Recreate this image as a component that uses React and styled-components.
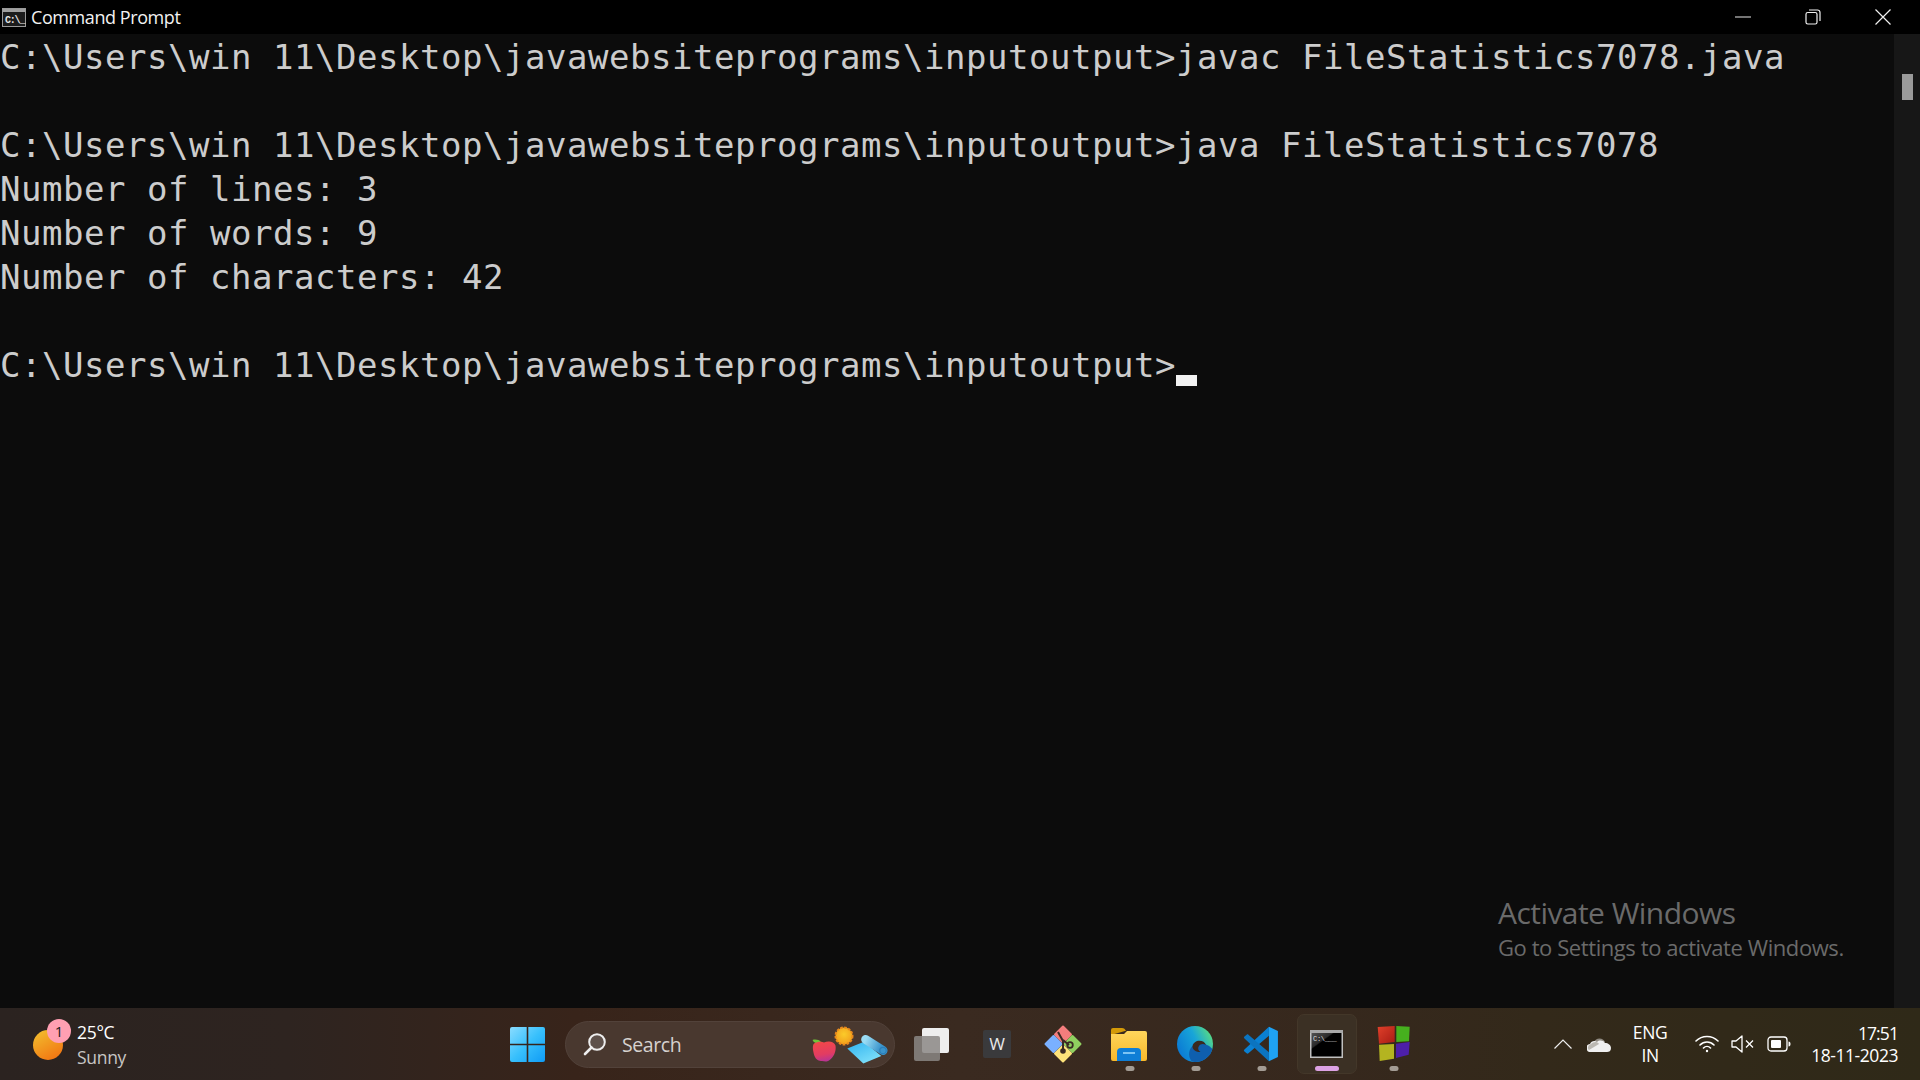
import React from 'react';
import styled, { createGlobalStyle } from 'styled-components';

const Global = createGlobalStyle`
  html, body { margin: 0; padding: 0; background: #0c0c0c; }
  #root { width: 1920px; height: 1080px; overflow: hidden; }
`;

const Screen = styled.div`
  width: 1920px;
  height: 1080px;
  display: flex;
  flex-direction: column;
  position: relative;
  font-family: "Open Sans", "Noto Sans", sans-serif;
`;

const TitleBar = styled.div`
  height: 34px;
  background: #000;
  display: flex;
  align-items: center;
  padding: 0 2px;
  color: #fff;
`;

const TitleText = styled.span`
  margin-left: 5px;
  font-size: 18px;
  letter-spacing: -0.42px;
  color: #f2f2f2;
`;

const Controls = styled.div`
  margin-left: auto;
  display: flex;
`;

const ControlButton = styled.div`
  width: 70px;
  height: 34px;
  display: flex;
  align-items: center;
  justify-content: center;
`;

const Console = styled.div`
  flex: 1;
  background: #0c0c0c;
  display: flex;
  min-height: 0;
`;

const Output = styled.div`
  flex: 1;
  padding-top: 1px;
  font-family: "DejaVu Sans Mono", "Liberation Mono", monospace;
  font-size: 34px;
  letter-spacing: 0.53px;
  line-height: 44px;
  color: #cccccc;
`;

const Line = styled.div`
  height: 44px;
  white-space: pre;
`;

const Cursor = styled.span`
  display: inline-block;
  width: 21px;
  height: 11px;
  background: #f2f2f2;
  vertical-align: -9px;
`;

const Scrollbar = styled.div`
  width: 26px;
  background: #171717;
  padding: 40px 7px 0 8px;
  box-sizing: border-box;
`;

const Thumb = styled.div`
  height: 26px;
  background: #9a9a9a;
`;

const Watermark = styled.div`
  position: absolute;
  left: 1498px;
  top: 894px;
  color: #6a6a6a;
`;

const WatermarkTitle = styled.div`
  font-size: 30px;
  font-weight: 400;
  line-height: 38px;
  letter-spacing: -0.55px;
`;

const WatermarkSub = styled.div`
  font-size: 22px;
  font-weight: 400;
  line-height: 31px;
  letter-spacing: -0.42px;
`;

const Taskbar = styled.div`
  height: 72px;
  flex: none;
  display: flex;
  align-items: center;
  color: #fff;
  background: linear-gradient(90deg, #2b2320 0%, #2e2420 15%, #38241a 30%, #3a2a20 50%, #36281d 70%, #33291a 80%, #2f2918 100%);
`;

const Weather = styled.div`
  width: 510px;
  padding-left: 33px;
  box-sizing: border-box;
  display: flex;
  align-items: center;
  gap: 14px;
`;

const WeatherIcon = styled.div`
  position: relative;
  width: 30px;
  height: 30px;
  margin-top: 2px;
  border-radius: 50%;
  background: linear-gradient(150deg, #f2c230, #f26c0e);
`;

const Badge = styled.div`
  position: absolute;
  left: 14px;
  top: -11px;
  width: 24px;
  height: 24px;
  border-radius: 50%;
  background: #ff9fb2;
  color: #1a1a1a;
  font-size: 15px;
  line-height: 24px;
  text-align: center;
`;

const WeatherText = styled.div`
  margin-top: 2px;
  font-size: 17.5px;
  line-height: 25px;
  letter-spacing: -0.3px;
`;

const Muted = styled.div`
  color: #c8c6c4;
`;

const StartButton = styled.div`
  width: 55px;
  display: flex;
`;

const SearchBox = styled.div`
  width: 330px;
  height: 47px;
  box-sizing: border-box;
  display: flex;
  align-items: center;
  padding-left: 17px;
  gap: 15px;
  border-radius: 24px;
  background: #49382f;
  border: 1px solid #52423a;
  color: #d6d2cf;
`;

const SearchLabel = styled.span`
  margin-top: 1px;
  font-size: 19.5px;
  letter-spacing: -0.4px;
`;

const Highlights = styled.div`
  margin-left: auto;
  margin-right: 6px;
  display: flex;
`;

const Apps = styled.div`
  display: flex;
  margin-left: 4px;
`;

const AppSlot = styled.div`
  position: relative;
  width: 66px;
  height: 60px;
  display: flex;
  align-items: center;
  justify-content: center;
`;

const ActiveTile = styled.div`
  position: absolute;
  left: 2px;
  top: 0;
  width: 60px;
  height: 60px;
  border-radius: 7px;
  background: #3b3024;
  border: 1px solid #433729;
  box-sizing: border-box;
`;

const AppIcon = styled.div`
  position: relative;
  display: flex;
  left: ${({ $shift }) => $shift || 0}px;
`;

const RunDot = styled.div`
  position: absolute;
  left: calc(50% - ${({ $active }) => ($active ? '1px' : '0px')});
  bottom: 3px;
  width: ${({ $active }) => ($active ? '24px' : '9px')};
  height: 5px;
  transform: translateX(-50%);
  border-radius: 3px;
  background: ${({ $active }) => ($active ? '#dca2e4' : '#a39c94')};
`;

const Tray = styled.div`
  margin-left: auto;
  padding-right: 22px;
  display: flex;
  align-items: center;
`;

const TrayIcon = styled.div`
  display: flex;
  margin-left: ${({ $gap }) => $gap}px;
`;

const Lang = styled.div`
  margin-left: 20px;
  width: 38px;
  font-size: 17.5px;
  line-height: 23px;
  text-align: center;
  letter-spacing: -0.3px;
`;

const Clock = styled.div`
  margin-left: 20px;
  font-size: 17.5px;
  line-height: 22px;
  text-align: right;
  letter-spacing: -0.45px;
`;

const ClockTime = styled.div`
  letter-spacing: -0.9px;
`;

const CmdIcon = () => (
  <svg width="24" height="19" viewBox="0 0 24 19">
    <rect x="0.5" y="0.5" width="23" height="18" fill="#1c1c1c" stroke="#9a9a9a" />
    <rect x="1" y="1" width="22" height="3" fill="#a0a0a0" />
    <text x="3" y="15" fontFamily="Liberation Mono, monospace" fontWeight="700" fontSize="10" letterSpacing="-1.200" fill="#e6e6e6">C:\_</text>
  </svg>
);

const Minimize = () => (
  <svg width="16" height="2" viewBox="0 0 16 2"><path d="M0 1h16" stroke="#e8e8e8" strokeWidth="1" /></svg>
);

const Restore = () => (
  <svg width="16" height="16" viewBox="0 0 16 16" fill="none" stroke="#f0f0f0" strokeWidth="1.2">
    <rect x="1" y="3.5" width="11" height="11.5" rx="1.8" />
    <path d="M4 1h8.5a2.5 2.5 0 0 1 2.5 2.5V12" />
  </svg>
);

const Close = () => (
  <svg width="16" height="16" viewBox="0 0 16 16"><path d="M.5.5l15 15M15.5.5l-15 15" stroke="#f0f0f0" strokeWidth="1.2" /></svg>
);

const WindowsLogo = () => (
  <svg width="35" height="35" viewBox="0 0 35 35">
    <defs>
      <linearGradient id="win" x1="0" y1="0" x2="1" y2="1">
        <stop offset="0" stopColor="#8adcff" />
        <stop offset="0.5" stopColor="#38c0fc" />
        <stop offset="1" stopColor="#0f9bf5" />
      </linearGradient>
    </defs>
    <path d="M2 0h14.7v16.7H0V2a2 2 0 0 1 2-2zM18.300 0H33a2 2 0 0 1 2 2v14.700H18.300zM0 18.300h16.700V35H2a2 2 0 0 1-2-2zM18.300 18.300H35V33a2 2 0 0 1-2 2H18.300z" fill="url(#win)" />
  </svg>
);

const SearchGlass = () => (
  <svg width="24" height="24" viewBox="0 0 24 24" fill="none">
    <circle cx="14" cy="10" r="7.800" fill="#5e514b" stroke="#eee" strokeWidth="2" />
    <path d="M8.500 15.500L2 22" stroke="#eee" strokeWidth="2.600" strokeLinecap="round" />
  </svg>
);

const SearchHighlights = () => (
  <svg width="76" height="40" viewBox="0 0 76 40">
    <defs>
      <linearGradient id="apple" x1="0.300" y1="0" x2="0.500" y2="1">
        <stop offset="0" stopColor="#f24848" />
        <stop offset="0.650" stopColor="#e23c62" />
        <stop offset="1" stopColor="#b83494" />
      </linearGradient>
      <radialGradient id="sun" cx="0.500" cy="0.400" r="0.600">
        <stop offset="0" stopColor="#fbcb2a" />
        <stop offset="1" stopColor="#f29f1c" />
      </radialGradient>
      <linearGradient id="mat" x1="0" y1="0" x2="0.700" y2="1">
        <stop offset="0" stopColor="#2fb3f0" />
        <stop offset="1" stopColor="#7fe0fa" />
      </linearGradient>
      <linearGradient id="roll" x1="0" y1="0" x2="1" y2="0.300">
        <stop offset="0" stopColor="#9adcf4" />
        <stop offset="1" stopColor="#3a94cc" />
      </linearGradient>
    </defs>
    <path d="M9 18C7 15.500 3 15 .5 16 2 19 5 20 9.500 19.500z" fill="#6fc23a" />
    <path d="M2 19.500c4-2.500 8-2 10-1 4-2 10-1.500 11.500 3 1 6-2 12-6.500 15-3 1.800-5 .5-7 .5-3 0-6-1-7.500-5-1.500-5-2.500-10-.5-12.500z" fill="url(#apple)" />
    <circle cx="32" cy="12" r="8.500" fill="url(#sun)" stroke="#e8881c" strokeWidth="2" strokeDasharray="2.600 1.400" />
    <path d="M35.300 24.500L52 17.800 69.300 32 51.300 39.500z" fill="url(#mat)" />
    <path d="M53.700 15.500L71 26.500" stroke="url(#roll)" strokeWidth="9" strokeLinecap="round" />
    <circle cx="71" cy="26.500" r="3.200" fill="none" stroke="#2b7fba" strokeWidth="1.200" />
  </svg>
);

const TaskView = () => (
  <svg width="36" height="36" viewBox="0 0 36 36">
    <rect x="9" y="2" width="27" height="25" rx="2" fill="#eeeeee" />
    <rect x="1" y="10" width="26" height="25" rx="2" fill="#8b8785" fillOpacity="0.85" />
  </svg>
);

const WordIcon = () => (
  <svg width="28" height="28" viewBox="0 0 28 28">
    <rect width="28" height="28" rx="2" fill="#3a3a3c" />
    <text x="14" y="20" textAnchor="middle" fontFamily="Open Sans, sans-serif" fontSize="17" fill="#e8e8e8">W</text>
  </svg>
);

const GitIcon = () => (
  <svg width="38" height="38" viewBox="0 0 38 38">
    <path d="M19 1.500L27 9.500 19 17.500 11 9.500z" fill="#f47d7d" stroke="#f47d7d" strokeWidth="2" strokeLinejoin="round" />
    <path d="M28.500 11L36.500 19 28.500 27 20.500 19z" fill="#90cf60" stroke="#90cf60" strokeWidth="2" strokeLinejoin="round" />
    <path d="M19 20.500L27 28.500 19 36.500 11 28.500z" fill="#fde27a" stroke="#fde27a" strokeWidth="2" strokeLinejoin="round" />
    <path d="M9.500 11L17.500 19 9.500 27 1.500 19z" fill="#7ab0ff" stroke="#7ab0ff" strokeWidth="2" strokeLinejoin="round" />
    <path d="M14 7l5 9v10M19 15l6 5" stroke="#3a2a24" strokeWidth="2" fill="none" />
    <circle cx="19" cy="26" r="2.800" fill="#3a2a24" />
    <circle cx="26" cy="20" r="2.800" fill="none" stroke="#3a2a24" strokeWidth="1.800" />
  </svg>
);

const FolderIcon = () => (
  <svg width="36" height="34" viewBox="0 0 36 34">
    <defs>
      <linearGradient id="fold" x1="0" y1="0" x2="0" y2="1">
        <stop offset="0" stopColor="#ffd65c" />
        <stop offset="1" stopColor="#f8b82a" />
      </linearGradient>
    </defs>
    <path d="M0 3a2 2 0 0 1 2-2h9c2 0 3 1 4 3h-1L0 8z" fill="#d49a08" />
    <path d="M0 7h13l3-3h18a2 2 0 0 1 2 2v26a2 2 0 0 1-2 2H2a2 2 0 0 1-2-2z" fill="url(#fold)" />
    <path d="M6 34V25a4 4 0 0 1 4-4h16a4 4 0 0 1 4 4v9z" fill="#0f7ed6" />
    <rect x="12" y="25" width="12" height="2" fill="#7cc4f4" />
  </svg>
);

const EdgeIcon = () => (
  <svg width="36" height="36" viewBox="0 0 36 36">
    <defs>
      <linearGradient id="edgeA" x1="0" y1="0.700" x2="1" y2="0.200">
        <stop offset="0" stopColor="#0a78d4" />
        <stop offset="0.550" stopColor="#18a5d8" />
        <stop offset="1" stopColor="#5ee07c" />
      </linearGradient>
    </defs>
    <circle cx="18" cy="18" r="18" fill="url(#edgeA)" />
    <path d="M35.500 23c-4-5-13-8-19-4-5 4-6 11-2 16 1 .5 3 1 4 1 6 0 11-3 15-8z" fill="#0f5fae" />
    <path d="M20 15c4-1 8 .5 9 4-3-2-6-1-7 1-1.500 2-1 4.500 1.500 6-4.500 0-8-2-8-5.500 0-2.500 2-4.500 4.500-5.500z" fill="#3a2a20" />
  </svg>
);

const VsCodeIcon = () => (
  <svg width="36" height="36" viewBox="0 0 100 100">
    <path d="M72 2L4 65a4 4 0 0 0 0 6l6 5c2 1 4 1 5 0L72 27z" fill="#0a80d2" />
    <path d="M72 98L4 35a4 4 0 0 1 0-6l6-5c2-1 4-1 5 0L72 73z" fill="#0b74c0" />
    <path d="M72 2L97 14V86L72 98z" fill="#1fa2f2" />
  </svg>
);

const TerminalIcon = () => (
  <svg width="33" height="28" viewBox="0 0 33 28">
    <defs>
      <linearGradient id="gloss" x1="0" y1="0" x2="0.600" y2="0.700">
        <stop offset="0" stopColor="#5a5a5a" />
        <stop offset="0.550" stopColor="#2a2a2a" />
        <stop offset="0.600" stopColor="#000" />
      </linearGradient>
    </defs>
    <rect x="0.750" y="0.750" width="31.500" height="26.500" fill="url(#gloss)" stroke="#c0c0c0" strokeWidth="1.500" />
    <rect x="0" y="0" width="33" height="3" fill="#a8a8a8" />
    <text x="3" y="11" fontFamily="Liberation Mono, monospace" fontSize="7" letterSpacing="-0.300" fill="#dcdcdc">C:\___</text>
  </svg>
);

const TilesIcon = () => (
  <svg width="34" height="36" viewBox="0 0 34 36">
    <defs>
      <linearGradient id="red" x1="0" y1="0" x2="1" y2="1">
        <stop offset="0" stopColor="#e0402a" />
        <stop offset="1" stopColor="#a81c14" />
      </linearGradient>
    </defs>
    <path d="M.7 1L17.700 0V16L2 17.700z" fill="url(#red)" />
    <path d="M19.300 0L32.700.7 32 15.300 19.300 16z" fill="#46b01e" />
    <path d="M2 18.700L17 18V32.700L2.700 35z" fill="#b4b420" />
    <path d="M19 17.700L32.700 16 31.700 28.700 19 32z" fill="#4d1fa8" />
  </svg>
);

const Chevron = () => (
  <svg width="18" height="10" viewBox="0 0 18 10"><path d="M.5 9.500L9 1l8.500 8.500" fill="none" stroke="#eee" strokeWidth="1.200" /></svg>
);

const Cloud = () => (
  <svg width="24" height="16" viewBox="0 0 24 16">
    <path d="M7 6a6 6 0 0 1 11 0z" fill="#8f8a82" />
    <path d="M4 16a4 4 0 0 1-1-8c1-3 5-4 7-2 2-2 6-2 8 1 3 0 6 2 6 5s-2 4-4 4z" fill="#f0f0f0" />
    <path d="M4 8c2-2 6-3 8 0L2 14C0 12 1 9 4 8z" fill="#bbb8b2" />
  </svg>
);

const Wifi = () => (
  <svg width="24" height="18" viewBox="0 0 24 18" fill="none" stroke="#fff" strokeWidth="1.600" strokeLinecap="round">
    <path d="M1 6c6-6 16-6 22 0M5 10c4-4 10-4 14 0M8.500 13c2-2 5-2 7 0" />
    <circle cx="12" cy="16" r="1.200" fill="#fff" stroke="none" />
  </svg>
);

const Speaker = () => (
  <svg width="24" height="18" viewBox="0 0 24 18" fill="none" stroke="#fff" strokeWidth="1.300">
    <path d="M1 6v6h4l6 5V1L5 6z" strokeLinejoin="round" />
    <path d="M15 5.500l7 7M22 5.500l-7 7" />
  </svg>
);

const Battery = () => (
  <svg width="24" height="16" viewBox="0 0 24 16" fill="none">
    <rect x="1" y="1" width="19" height="14" rx="3" stroke="#fff" strokeWidth="1.300" />
    <rect x="4" y="4" width="10" height="8" rx="1" fill="#fff" />
    <path d="M21.500 5.500c1.500 0 2 1 2 2.500s-.5 2.500-2 2.500z" fill="#fff" />
  </svg>
);

const lines = [
  'C:\\Users\\win 11\\Desktop\\javawebsiteprograms\\inputoutput>javac FileStatistics7078.java',
  '',
  'C:\\Users\\win 11\\Desktop\\javawebsiteprograms\\inputoutput>java FileStatistics7078',
  'Number of lines: 3',
  'Number of words: 9',
  'Number of characters: 42',
  '',
];

const apps = [
  { icon: <TaskView />, shift: -1 },
  { icon: <WordIcon />, shift: -1 },
  { icon: <GitIcon />, shift: -1 },
  { icon: <FolderIcon />, running: true, shift: -1 },
  { icon: <EdgeIcon />, running: true, shift: -1 },
  { icon: <VsCodeIcon />, running: true, shift: -1 },
  { icon: <TerminalIcon />, running: true, active: true, shift: -2 },
  { icon: <TilesIcon />, running: true },
];

export default function App() {
  return (
    <Screen>
      <Global />
      <TitleBar>
        <CmdIcon />
        <TitleText>Command Prompt</TitleText>
        <Controls>
          <ControlButton><Minimize /></ControlButton>
          <ControlButton><Restore /></ControlButton>
          <ControlButton><Close /></ControlButton>
        </Controls>
      </TitleBar>
      <Console>
        <Output>
          {lines.map((line, i) => <Line key={i}>{line}</Line>)}
          <Line>C:\Users\win 11\Desktop\javawebsiteprograms\inputoutput&gt;<Cursor /></Line>
        </Output>
        <Scrollbar><Thumb /></Scrollbar>
      </Console>
      <Watermark>
        <WatermarkTitle>Activate Windows</WatermarkTitle>
        <WatermarkSub>Go to Settings to activate Windows.</WatermarkSub>
      </Watermark>
      <Taskbar>
        <Weather>
          <WeatherIcon><Badge>1</Badge></WeatherIcon>
          <WeatherText>
            <div>25°C</div>
            <Muted>Sunny</Muted>
          </WeatherText>
        </Weather>
        <StartButton><WindowsLogo /></StartButton>
        <SearchBox>
          <SearchGlass />
          <SearchLabel>Search</SearchLabel>
          <Highlights><SearchHighlights /></Highlights>
        </SearchBox>
        <Apps>
          {apps.map((app, i) => (
            <AppSlot key={i}>
              {app.active && <ActiveTile />}
              <AppIcon $shift={app.shift}>{app.icon}</AppIcon>
              {app.running && <RunDot $active={app.active} />}
            </AppSlot>
          ))}
        </Apps>
        <Tray>
          <TrayIcon $gap={0}><Chevron /></TrayIcon>
          <TrayIcon $gap={15}><Cloud /></TrayIcon>
          <Lang>ENG<br />IN</Lang>
          <TrayIcon $gap={26}><Wifi /></TrayIcon>
          <TrayIcon $gap={12}><Speaker /></TrayIcon>
          <TrayIcon $gap={12}><Battery /></TrayIcon>
          <Clock><ClockTime>17:51</ClockTime>18-11-2023</Clock>
        </Tray>
      </Taskbar>
    </Screen>
  );
}
